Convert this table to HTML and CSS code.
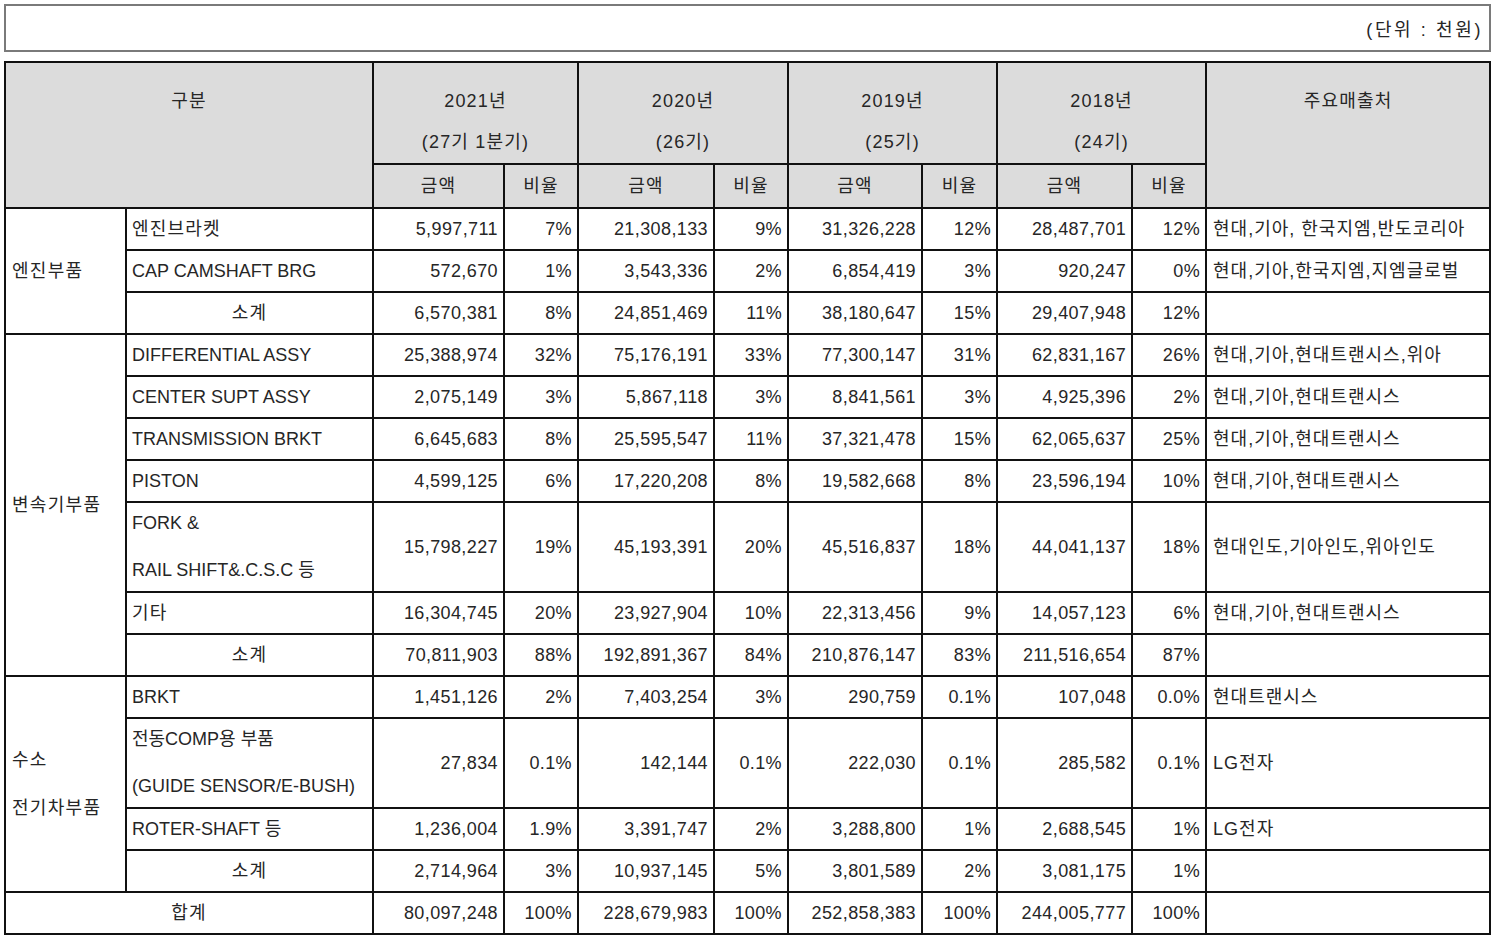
FILE: index.html
```html
<!DOCTYPE html>
<html lang="ko">
<head>
<meta charset="utf-8">
<title>주요 매출처</title>
<link rel="stylesheet" href="styles.css">
</head>
<body>
<div class="page">
  <div class="unit-box"><span class="unit">(단위 : 천원)</span></div>
  <table class="sales">
    <colgroup>
      <col class="c-grp"><col class="c-item">
      <col class="c-amt1"><col class="c-pct">
      <col class="c-amt2"><col class="c-pct">
      <col class="c-amt3"><col class="c-pct3">
      <col class="c-amt4"><col class="c-pct">
      <col class="c-cust">
    </colgroup>
    <thead>
      <tr class="h1">
        <th colspan="2" rowspan="2" class="top">구분</th>
        <th colspan="2" class="year">2021년<br>(27기 1분기)</th>
        <th colspan="2" class="year">2020년<br>(26기)</th>
        <th colspan="2" class="year">2019년<br>(25기)</th>
        <th colspan="2" class="year">2018년<br>(24기)</th>
        <th rowspan="2" class="top">주요매출처</th>
      </tr>
      <tr class="h2">
        <th>금액</th><th>비율</th>
        <th>금액</th><th>비율</th>
        <th>금액</th><th>비율</th>
        <th>금액</th><th>비율</th>
      </tr>
    </thead>
    <tbody>
      <tr class="r1">
        <td rowspan="3" class="grp">엔진부품</td>
        <td class="txt ko">엔진브라켓</td>
        <td class="num">5,997,711</td><td class="num">7%</td>
        <td class="num">21,308,133</td><td class="num">9%</td>
        <td class="num">31,326,228</td><td class="num">12%</td>
        <td class="num">28,487,701</td><td class="num">12%</td>
        <td class="cust">현대,기아, 한국지엠,반도코리아</td>
      </tr>
      <tr class="r1">
        <td class="txt">CAP CAMSHAFT BRG</td>
        <td class="num">572,670</td><td class="num">1%</td>
        <td class="num">3,543,336</td><td class="num">2%</td>
        <td class="num">6,854,419</td><td class="num">3%</td>
        <td class="num">920,247</td><td class="num">0%</td>
        <td class="cust">현대,기아,한국지엠,지엠글로벌</td>
      </tr>
      <tr class="r1">
        <td class="ctr ko">소계</td>
        <td class="num">6,570,381</td><td class="num">8%</td>
        <td class="num">24,851,469</td><td class="num">11%</td>
        <td class="num">38,180,647</td><td class="num">15%</td>
        <td class="num">29,407,948</td><td class="num">12%</td>
        <td class="cust"></td>
      </tr>

      <tr class="r1">
        <td rowspan="7" class="grp">변속기부품</td>
        <td class="txt">DIFFERENTIAL ASSY</td>
        <td class="num">25,388,974</td><td class="num">32%</td>
        <td class="num">75,176,191</td><td class="num">33%</td>
        <td class="num">77,300,147</td><td class="num">31%</td>
        <td class="num">62,831,167</td><td class="num">26%</td>
        <td class="cust">현대,기아,현대트랜시스,위아</td>
      </tr>
      <tr class="r1">
        <td class="txt">CENTER SUPT ASSY</td>
        <td class="num">2,075,149</td><td class="num">3%</td>
        <td class="num">5,867,118</td><td class="num">3%</td>
        <td class="num">8,841,561</td><td class="num">3%</td>
        <td class="num">4,925,396</td><td class="num">2%</td>
        <td class="cust">현대,기아,현대트랜시스</td>
      </tr>
      <tr class="r1">
        <td class="txt">TRANSMISSION BRKT</td>
        <td class="num">6,645,683</td><td class="num">8%</td>
        <td class="num">25,595,547</td><td class="num">11%</td>
        <td class="num">37,321,478</td><td class="num">15%</td>
        <td class="num">62,065,637</td><td class="num">25%</td>
        <td class="cust">현대,기아,현대트랜시스</td>
      </tr>
      <tr class="r1">
        <td class="txt">PISTON</td>
        <td class="num">4,599,125</td><td class="num">6%</td>
        <td class="num">17,220,208</td><td class="num">8%</td>
        <td class="num">19,582,668</td><td class="num">8%</td>
        <td class="num">23,596,194</td><td class="num">10%</td>
        <td class="cust">현대,기아,현대트랜시스</td>
      </tr>
      <tr class="r2">
        <td class="txt"><div class="stack"><div class="ln">FORK &amp;</div><div class="ln">RAIL SHIFT&amp;.C.S.C 등</div></div></td>
        <td class="num">15,798,227</td><td class="num">19%</td>
        <td class="num">45,193,391</td><td class="num">20%</td>
        <td class="num">45,516,837</td><td class="num">18%</td>
        <td class="num">44,041,137</td><td class="num">18%</td>
        <td class="cust">현대인도,기아인도,위아인도</td>
      </tr>
      <tr class="r1">
        <td class="txt ko">기타</td>
        <td class="num">16,304,745</td><td class="num">20%</td>
        <td class="num">23,927,904</td><td class="num">10%</td>
        <td class="num">22,313,456</td><td class="num">9%</td>
        <td class="num">14,057,123</td><td class="num">6%</td>
        <td class="cust">현대,기아,현대트랜시스</td>
      </tr>
      <tr class="r1">
        <td class="ctr ko">소계</td>
        <td class="num">70,811,903</td><td class="num">88%</td>
        <td class="num">192,891,367</td><td class="num">84%</td>
        <td class="num">210,876,147</td><td class="num">83%</td>
        <td class="num">211,516,654</td><td class="num">87%</td>
        <td class="cust"></td>
      </tr>

      <tr class="r1">
        <td rowspan="4" class="grp grp2">수소<br>전기차부품</td>
        <td class="txt">BRKT</td>
        <td class="num">1,451,126</td><td class="num">2%</td>
        <td class="num">7,403,254</td><td class="num">3%</td>
        <td class="num">290,759</td><td class="num">0.1%</td>
        <td class="num">107,048</td><td class="num">0.0%</td>
        <td class="cust">현대트랜시스</td>
      </tr>
      <tr class="r2">
        <td class="txt"><div class="stack"><div class="ln">전동COMP용 부품</div><div class="ln">(GUIDE SENSOR/E-BUSH)</div></div></td>
        <td class="num">27,834</td><td class="num">0.1%</td>
        <td class="num">142,144</td><td class="num">0.1%</td>
        <td class="num">222,030</td><td class="num">0.1%</td>
        <td class="num">285,582</td><td class="num">0.1%</td>
        <td class="cust">LG전자</td>
      </tr>
      <tr class="r1">
        <td class="txt">ROTER-SHAFT 등</td>
        <td class="num">1,236,004</td><td class="num">1.9%</td>
        <td class="num">3,391,747</td><td class="num">2%</td>
        <td class="num">3,288,800</td><td class="num">1%</td>
        <td class="num">2,688,545</td><td class="num">1%</td>
        <td class="cust">LG전자</td>
      </tr>
      <tr class="r1">
        <td class="ctr ko">소계</td>
        <td class="num">2,714,964</td><td class="num">3%</td>
        <td class="num">10,937,145</td><td class="num">5%</td>
        <td class="num">3,801,589</td><td class="num">2%</td>
        <td class="num">3,081,175</td><td class="num">1%</td>
        <td class="cust"></td>
      </tr>

      <tr class="r1">
        <td colspan="2" class="ctr ko">합계</td>
        <td class="num">80,097,248</td><td class="num">100%</td>
        <td class="num">228,679,983</td><td class="num">100%</td>
        <td class="num">252,858,383</td><td class="num">100%</td>
        <td class="num">244,005,777</td><td class="num">100%</td>
        <td class="cust"></td>
      </tr>
    </tbody>
  </table>
</div>
</body>
</html>
```
FILE: styles.css
```css
html, body {
  margin: 0;
  padding: 0;
  background: #ffffff;
}

.page {
  padding: 4px 0 0 4px;
  font-family: "Liberation Sans", "Noto Sans CJK KR", sans-serif;
  font-size: 18px;
  color: #262626;
}

.unit-box {
  box-sizing: border-box;
  width: 1487px;
  height: 48px;
  border: 2px solid #7a7a7a;
  display: flex;
  align-items: center;
  justify-content: flex-end;
  padding-right: 6px;
}

.unit {
  letter-spacing: 2.6px;
}

.sales {
  margin-top: 9px;
  border-collapse: collapse;
  table-layout: fixed;
  width: 1487px;
  border-left: 2px solid #5a5a5a;
}

.c-grp { width: 121px; }
.c-item { width: 247px; }
.c-amt1 { width: 131px; }
.c-pct { width: 74px; }
.c-pct3 { width: 75px; }
.c-amt2 { width: 136px; }
.c-amt3 { width: 134px; }
.c-amt4 { width: 135px; }
.c-cust { width: 284px; }

.sales th,
.sales td {
  border: 2px solid #111111;
  padding: 0;
  white-space: nowrap;
  overflow: hidden;
}

.sales th {
  background: #dcdcdc;
  font-weight: normal;
  text-align: center;
  line-height: 42px;
  letter-spacing: 1.2px;
}

.sales th.top,
.sales th.year {
  vertical-align: top;
  padding-top: 18px;
  line-height: 41px;
}

.h1 { height: 100px; }
.h2 { height: 40px; }
.r1 { height: 40px; }
.r2 { height: 88px; }

.sales td {
  line-height: 40px;
  vertical-align: middle;
}

.txt {
  text-align: left;
  padding-left: 5px !important;
}

.ctr {
  text-align: center;
}

.ko {
  letter-spacing: 1.2px;
}

.num {
  text-align: right;
  padding-right: 5px !important;
  letter-spacing: 0.4px;
}

.cust {
  text-align: left;
  padding-left: 6px !important;
  letter-spacing: 1px;
}

.grp {
  text-align: left;
  padding-left: 6px !important;
  letter-spacing: 1.3px;
}

.grp2 {
  line-height: 48px !important;
}

.stack {
  display: flex;
  flex-direction: column;
  gap: 6px;
}

.stack .ln {
  height: 41px;
  line-height: 41px;
}
```
